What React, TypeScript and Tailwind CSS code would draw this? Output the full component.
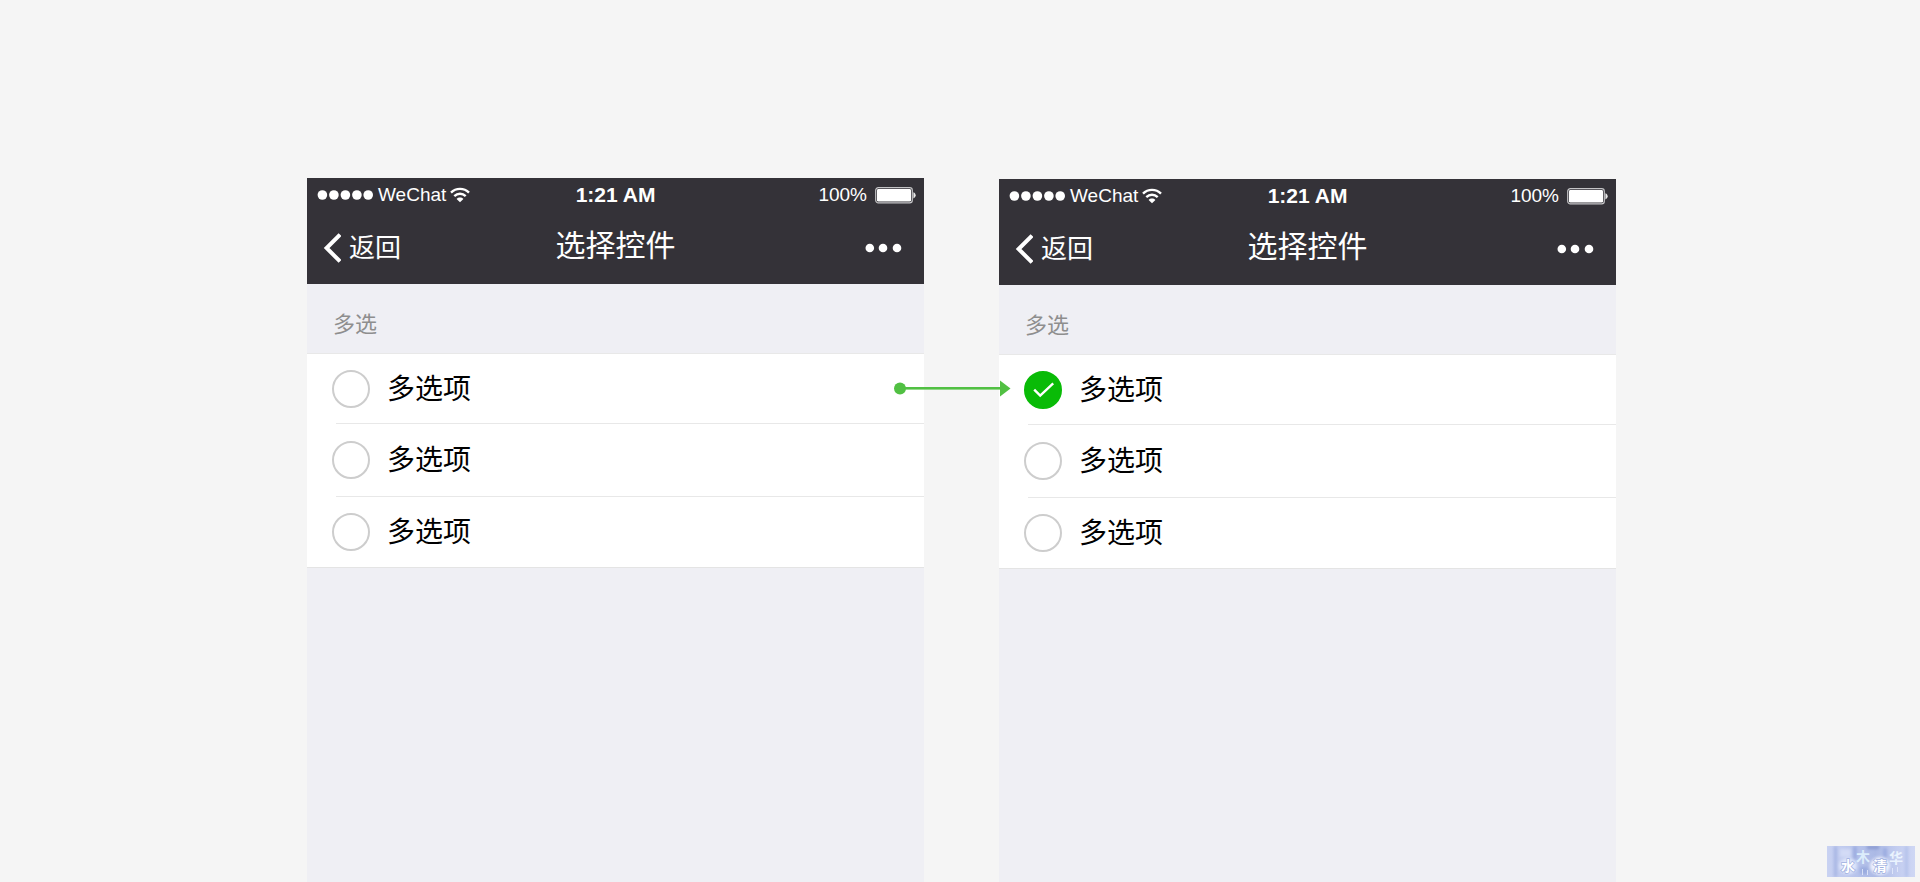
import React from "react";

const SANS = "font-['Liberation_Sans','Noto_Sans_CJK_SC',sans-serif]";

function SignalDots() {
  return (
    <svg width="56" height="12" viewBox="0 0 56 12" fill="white" aria-hidden="true">
      {[5.4, 16.9, 28.4, 39.9, 51.2].map((cx) => (
        <circle key={cx} cx={cx} cy="6" r="4.8" />
      ))}
    </svg>
  );
}

function WifiIcon() {
  return (
    <svg width="20" height="16" viewBox="0 0 20 16" fill="none" stroke="white" aria-hidden="true">
      <path d="M1 5.6C6 0.6 14 0.6 19 5.6" strokeWidth="2.4" />
      <path d="M4.3 9.2C7.6 6 12.4 6 15.7 9.2" strokeWidth="2.4" />
      <path d="M10 15.3L6.6 11.9C8.5 10.1 11.5 10.1 13.4 11.9Z" fill="white" stroke="none" />
    </svg>
  );
}

function BatteryIcon() {
  return (
    <svg width="41" height="17" viewBox="0 0 41 17" aria-hidden="true">
      <rect x="0.7" y="0.7" width="36.6" height="15.2" rx="2.6" fill="none" stroke="#c4c4c6" strokeWidth="1.2" />
      <rect x="2" y="2" width="34" height="12.6" rx="1.4" fill="white" />
      <path d="M38.4 5.2C41.4 6.2 41.4 10.4 38.4 11.4Z" fill="#e8e8e8" />
    </svg>
  );
}

function StatusBar() {
  return (
    <div className="grid h-[34px] grid-cols-3 items-center px-2.5 text-[19px] leading-6">
      <div className="flex items-center">
        <SignalDots />
        <span className="ml-[5px]">WeChat</span>
        <span className="ml-1">
          <WifiIcon />
        </span>
      </div>
      <span className="text-center text-[21px] font-bold">1:21 AM</span>
      <div className="-mr-0.5 flex items-center justify-end gap-2">
        <span>100%</span>
        <BatteryIcon />
      </div>
    </div>
  );
}

function NavBar() {
  return (
    <div className="grid h-[72px] grid-cols-3 items-center px-4">
      <button type="button" className="flex items-center gap-2 text-[26px] leading-8">
        <svg width="18" height="30" viewBox="0 0 18 30" fill="none" stroke="white" strokeWidth="4" aria-hidden="true">
          <path d="M17 1.6L3.6 15L17 28.4" />
        </svg>
        <span>返回</span>
      </button>
      <h1 className="pb-1 text-center text-[30px] leading-10">选择控件</h1>
      <button type="button" aria-label="更多" className="justify-self-end">
        <svg width="44" height="12" viewBox="0 0 44 12" fill="white" aria-hidden="true">
          <circle cx="5.8" cy="6" r="4.3" />
          <circle cx="19" cy="6" r="4.3" />
          <circle cx="33" cy="6" r="4.3" />
        </svg>
      </button>
    </div>
  );
}

function Option({ label, checked }: { label: string; checked?: boolean }) {
  return (
    <li className="group">
      <div className="ml-[29px] h-px bg-[#e8e8e8] group-first:ml-0" />
      <label className="flex h-[72px] items-center gap-[17px] pl-[25px] text-[28px] leading-9 text-black group-first:h-[69px] group-last:h-[70px]">
        <span className="relative flex">
          <input
            type="checkbox"
            defaultChecked={checked}
            className="peer size-[38px] appearance-none rounded-full border-2 border-[#cdcdcd] bg-white checked:border-[#09bb07] checked:bg-[#09bb07]"
          />
          <svg
            className="pointer-events-none absolute inset-0 hidden peer-checked:block"
            width="38"
            height="38"
            viewBox="0 0 38 38"
            fill="none"
            stroke="white"
            strokeWidth="2.4"
            aria-hidden="true"
          >
            <path d="M10.2 18.6L16.2 24.6L29.2 12.4" />
          </svg>
        </span>
        <span className="pt-0.5">{label}</span>
      </label>
    </li>
  );
}

function Phone({ selected, className }: { selected?: number; className?: string }) {
  return (
    <section className={`flex min-w-0 max-w-[617px] flex-1 flex-col bg-[#efeff4] ${className ?? ""}`}>
      <header className="bg-[#343238] text-white">
        <StatusBar />
        <NavBar />
      </header>
      <h2 className="flex h-[69px] items-center pl-[26px] pt-3 text-[22px] leading-8 text-[#8e8e8e]">多选</h2>
      <ul className="border-b border-[#e4e4e4] bg-white">
        {[0, 1, 2].map((index) => (
          <Option key={index} label="多选项" checked={selected === index} />
        ))}
      </ul>
    </section>
  );
}

function Connector() {
  return (
    <div className="relative w-[75px] shrink-0">
      <svg
        className="absolute -left-[30px] top-[202px] z-10"
        width="117"
        height="17"
        viewBox="0 0 117 17"
        fill="#51c043"
        aria-hidden="true"
      >
        <circle cx="6" cy="8.4" r="6" />
        <rect x="6" y="7" width="102" height="2.6" />
        <path d="M106 0.6L116.5 8.5L106 16.4Z" />
      </svg>
    </div>
  );
}

function Watermark() {
  return (
    <svg className="absolute bottom-[5px] right-[5px]" width="88" height="31" viewBox="0 0 88 31" role="img" aria-label="水木清华">
      <defs>
        <linearGradient id="wash" x1="0" x2="1" y1="0" y2="0">
          <stop offset="0" stopColor="#c9d2f2" />
          <stop offset="0.3" stopColor="#b9c5ec" />
          <stop offset="0.55" stopColor="#abb9e5" />
          <stop offset="0.8" stopColor="#c3cdf0" />
          <stop offset="1" stopColor="#cfd7f4" />
        </linearGradient>
        <filter id="soft" x="-20%" y="-20%" width="140%" height="140%">
          <feGaussianBlur stdDeviation="1.4" />
        </filter>
        <clipPath id="frame">
          <rect width="88" height="31" />
        </clipPath>
      </defs>
      <g clipPath="url(#frame)">
        <rect width="88" height="31" fill="url(#wash)" />
        <g filter="url(#soft)">
          <rect x="7" y="0" width="3" height="31" fill="#a5b4e2" />
          <rect x="13" y="3" width="11" height="8" fill="#d3dbf6" />
          <rect x="26" y="0" width="4" height="14" fill="#9dade0" />
          <rect x="40" y="0" width="12" height="3" fill="#8797cf" />
          <rect x="56" y="2" width="4" height="10" fill="#9bace0" />
          <rect x="78" y="0" width="3" height="31" fill="#b3c1ea" />
          <ellipse cx="21" cy="20" rx="9" ry="8" fill="#dfe6fb" />
          <ellipse cx="53" cy="20" rx="10" ry="9" fill="#eef2fe" />
          <rect x="33" y="21" width="8" height="7" fill="#9aabdf" />
        </g>
        <g fill="#e6ecfc" opacity="0.8">
          <rect x="35" y="23" width="1" height="6" />
          <rect x="40" y="24" width="1" height="5" />
          <rect x="65" y="22" width="1" height="6" />
          <rect x="70" y="21" width="1" height="5" />
        </g>
        <g fontFamily="Noto Sans CJK SC, sans-serif" fontWeight="700">
          <text x="14" y="25" fontSize="14" fill="white" stroke="#9fafdf" strokeWidth="1.4" paintOrder="stroke">水</text>
          <text x="29" y="16" fontSize="14" fill="#dcedfb">木</text>
          <text x="46" y="25" fontSize="14" fill="white" stroke="#9fafdf" strokeWidth="1.4" paintOrder="stroke">清</text>
          <text x="62" y="17" fontSize="14" fill="#eaf3fe">华</text>
        </g>
      </g>
    </svg>
  );
}

export default function App() {
  return (
    <main className={`relative flex min-h-screen justify-center overflow-hidden bg-[#f5f5f5] pl-1 pr-px pt-[178px] ${SANS}`}>
      <Phone />
      <Connector />
      <Phone selected={0} className="mt-px" />
      <Watermark />
    </main>
  );
}
